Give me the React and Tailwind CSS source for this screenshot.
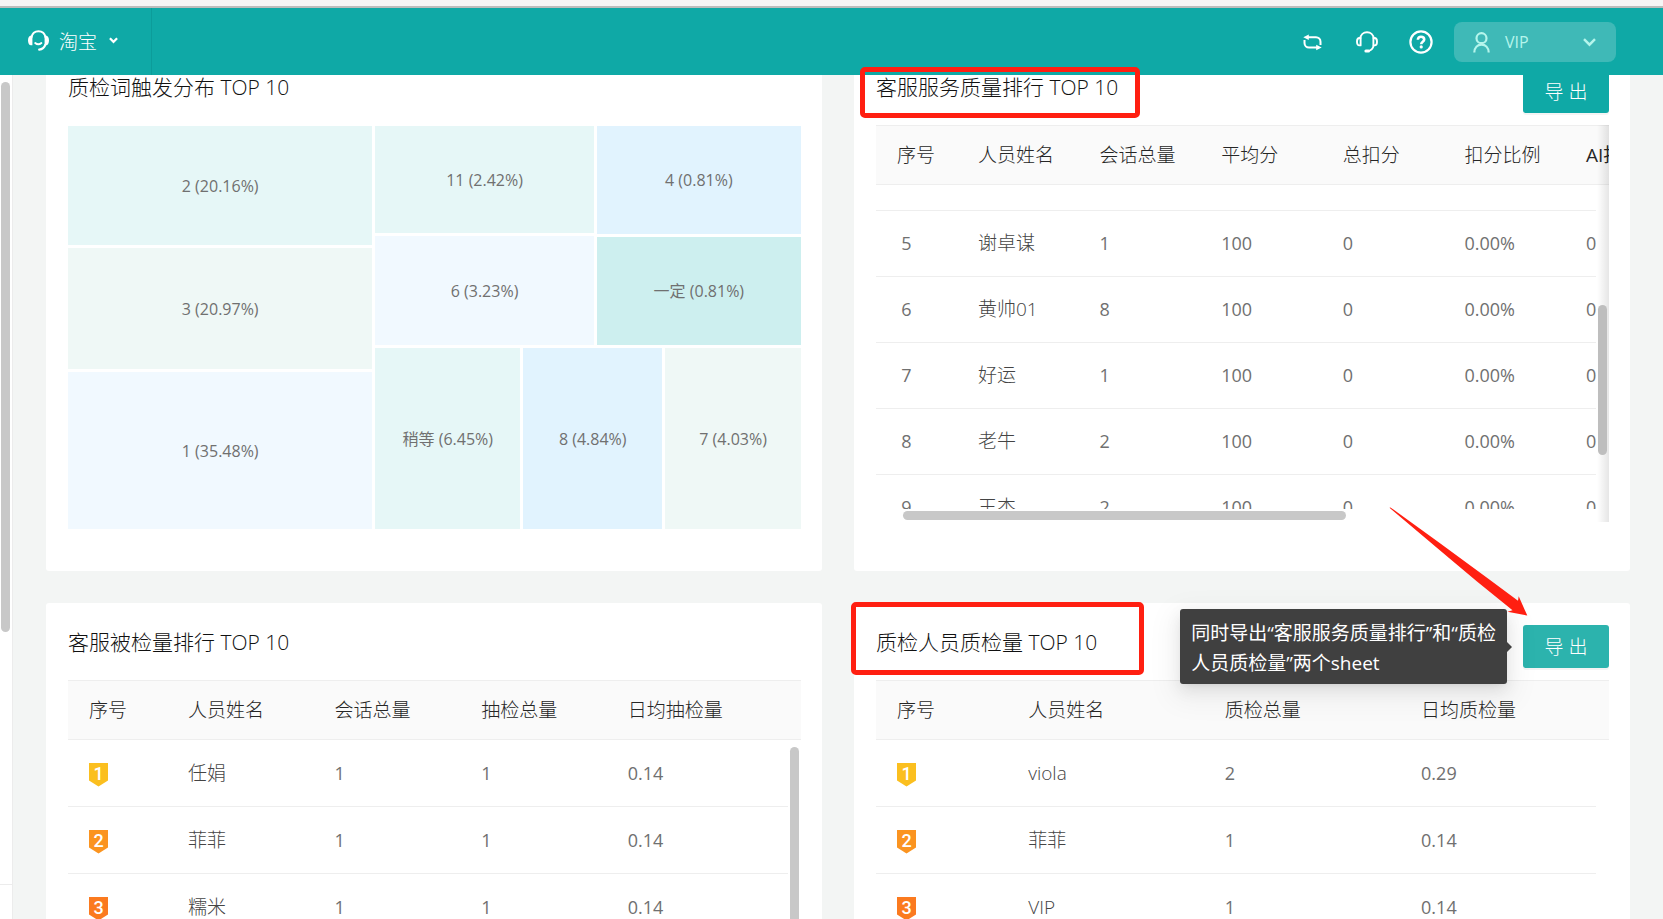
import React from 'react';

const BLOCK = 'flex items-center justify-center overflow-hidden whitespace-nowrap text-[16px] text-[#707070]';
const BADGE_TONES = {
  1: 'bg-[#fbbf1f]',
  2: 'bg-[#fb9420]',
  3: 'bg-[#fb7a1f]',
};

const QUALITY_COLUMNS = [
  { title: '序号', width: 'w-[81px]' },
  { title: '人员姓名' },
  { title: '会话总量' },
  { title: '平均分' },
  { title: '总扣分' },
  { title: '扣分比例' },
  { title: 'AI扣分', width: 'w-[31px]' },
];

const QUALITY_ROWS = [
  [5, '谢卓谋', '1', '100', '0', '0.00%', '0'],
  [6, '黄帅01', '8', '100', '0', '0.00%', '0'],
  [7, '好运', '1', '100', '0', '0.00%', '0'],
  [8, '老牛', '2', '100', '0', '0.00%', '0'],
  [9, '王杰', '2', '100', '0', '0.00%', '0'],
];

const CHECKED_COLUMNS = [
  { title: '序号', width: 'w-[13.5%]' },
  { title: '人员姓名', width: 'w-[20%]' },
  { title: '会话总量', width: 'w-[20%]' },
  { title: '抽检总量', width: 'w-[20%]' },
  { title: '日均抽检量' },
];

const CHECKED_ROWS = [
  [1, '任娟', '1', '1', '0.14'],
  [2, '菲菲', '1', '1', '0.14'],
  [3, '糯米', '1', '1', '0.14'],
];

const INSPECTOR_COLUMNS = [
  { title: '序号', width: 'w-[17.9%]' },
  { title: '人员姓名', width: 'w-[26.8%]' },
  { title: '质检总量', width: 'w-[26.8%]' },
  { title: '日均质检量' },
];

const INSPECTOR_ROWS = [
  [1, 'viola', '2', '0.29'],
  [2, '菲菲', '1', '0.14'],
  [3, 'VIP', '1', '0.14'],
];

function ServiceIcon() {
  return (
    <svg width="21" height="21" viewBox="0 0 21 21" fill="none" stroke="currentColor" strokeLinecap="round" aria-hidden="true">
      <path d="M3.4 7.5C4.2 3.6 7 1.3 10.5 1.3s6.3 2.3 7.1 6.2" strokeWidth="2" />
      <path d="M4.4 5.6v9.6H3C1.2 15.2 0 13 0 10.4s1.2-4.8 3-4.8zM16.6 5.6v9.6H18c1.8 0 3-2.2 3-4.8s-1.2-4.8-3-4.8z" fill="currentColor" stroke="none" />
      <path d="M7.2 13c1.8 1.5 4.4 1.5 6.2 0" strokeWidth="1.9" />
      <path d="M17.4 14.6c-1 2.9-3.2 4.7-6.2 5" strokeWidth="2.2" />
    </svg>
  );
}

function SwitchIcon() {
  return (
    <svg width="19" height="17" viewBox="0 0 19 17" fill="none" stroke="currentColor" strokeWidth="2" aria-hidden="true">
      <path d="M3.5 3.2H13a4.5 4.5 0 0 1 4.5 4.5V11" />
      <path d="M15.5 13.5H6A4.500 4.500 0 0 1 1.500 9V6" />
      <path d="M.3 3.2 5.8.4V6zM18.7 13.5l-5.500-2.800v5.600z" fill="currentColor" stroke="none" />
    </svg>
  );
}

function HeadsetIcon() {
  return (
    <svg width="22" height="22" viewBox="0 0 22 22" fill="none" stroke="currentColor" strokeWidth="1.9" strokeLinecap="round" aria-hidden="true">
      <path d="M4.3 7.5C4.7 3.7 7.4 1.2 11 1.2s6.3 2.5 6.7 6.3" />
      <path d="M4.6 7v7.4H3.4C1.9 14.4 1 13 1 10.7S1.9 7 3.4 7zM17.4 7v7.4h1.2c1.5 0 2.4-1.4 2.4-3.7S20.1 7 18.6 7z" strokeLinejoin="round" />
      <path d="M17.6 14.6c-.6 2.8-2.4 4.8-5 5.3" />
      <path d="M9.9 20.1h2.6" strokeWidth="3" />
    </svg>
  );
}

function HelpIcon() {
  return (
    <svg width="24" height="24" viewBox="0 0 24 24" fill="none" stroke="currentColor" strokeWidth="2.2" aria-hidden="true">
      <circle cx="12" cy="12" r="10.6" />
      <path d="M8.9 9.7c0-1.9 1.3-3 3.1-3s3.2 1.1 3.2 2.8c0 2.2-3 2.3-3 4.7" strokeWidth="2.6" />
      <circle cx="12.2" cy="16.9" r="1.6" fill="currentColor" stroke="none" />
    </svg>
  );
}

function UserIcon() {
  return (
    <svg width="17" height="21" viewBox="0 0 17 21" fill="none" stroke="currentColor" strokeWidth="2.2" aria-hidden="true">
      <circle cx="8.5" cy="6.2" r="5" />
      <path d="M1.3 20.5c.2-4.7 3.2-7.8 7.2-7.8s7 3.1 7.2 7.8" />
    </svg>
  );
}

function TopBar() {
  return (
    <header className="relative z-10 shrink-0">
      <div className="h-2 border-b-2 border-[#bcbdbc] bg-[#f5f5f5]" />
      <div className="flex h-[67px] items-center justify-between bg-[#0fa9a6] pr-[47px] text-white">
        <button type="button" className="flex h-full w-[152px] items-center border-r border-[#0c9c9a] pb-0.5 pl-7">
          <ServiceIcon />
          <span className="ml-[10px] pt-[3px] text-[19px] font-light">淘宝</span>
          <svg className="ml-3" width="9" height="7" viewBox="0 0 9 7" fill="none" stroke="currentColor" strokeWidth="2.2" aria-hidden="true">
            <path d="M.9 1.3 4.5 4.9 8.1 1.3" />
          </svg>
        </button>
        <div className="flex items-center pt-px">
          <button type="button" aria-label="切换" className="mr-[34px]"><SwitchIcon /></button>
          <button type="button" aria-label="客服" className="mr-[31px]"><HeadsetIcon /></button>
          <button type="button" aria-label="帮助" className="mr-[21px]"><HelpIcon /></button>
          <button type="button" className="flex h-10 w-[162px] items-center rounded-lg bg-[#3fb9b7] pl-[19px] pr-5 text-[#b5f5ec]">
            <UserIcon />
            <span className="ml-[15px] flex-1 text-left text-[16px]">VIP</span>
            <svg width="13" height="9" viewBox="0 0 13 9" fill="none" stroke="currentColor" strokeWidth="2.4" aria-hidden="true">
              <path d="M1 1.2 6.5 6.7 12 1.2" />
            </svg>
          </button>
        </div>
      </div>
    </header>
  );
}

function Card({ title, mark, action, children }) {
  return (
    <section className="rounded-[3px] bg-white py-[22px] pl-[22px] pr-[21px]">
      <div className="mb-3 flex h-[43px] items-start justify-between">
        <h2 className="relative text-[21px] font-light leading-[34px] text-[#111]">
          {title}
          {mark}
        </h2>
        {action}
      </div>
      {children}
    </section>
  );
}

function ExportButton({ active }) {
  return (
    <button
      type="button"
      className={`h-[43px] w-[86px] rounded-[3px] pt-0.5 text-[19px] font-light text-white shadow-[0_2px_0_rgba(0,0,0,0.045)] ${active ? 'bg-[#2cb3ad]' : 'bg-[#0fa9a6]'}`}
    >
      导 出
    </button>
  );
}

function RankCell({ rank }) {
  if (rank > 3) {
    return <span className="block w-[19px] text-center">{rank}</span>;
  }
  return (
    <span
      className={`mt-[3px] block h-6 w-[19px] text-center font-[Roboto] text-[18px] font-medium leading-[21px] text-white [clip-path:polygon(0_0,100%_0,100%_75%,50%_100%,0_75%)] ${BADGE_TONES[rank]}`}
    >
      {rank}
    </span>
  );
}

function RankTable({ columns, rows, scrolled }) {
  const last = columns.length - 1;
  return (
    <table className="w-full table-fixed border-separate border-spacing-0 text-left">
      <colgroup>
        {columns.map((column) => <col key={column.title} className={column.width} />)}
        <col className="w-[13px]" />
      </colgroup>
      <thead>
        <tr className="h-[60px]">
          {columns.map((column, i) => (
            <th
              key={column.title}
              colSpan={i === last ? 2 : 1}
              className={`overflow-hidden whitespace-nowrap border-y border-[#eee] bg-[#fafafa] pl-[21px] text-[19px] text-[#262626] ${column.title.startsWith('AI') ? 'font-normal' : 'font-light'}`}
            >
              {column.title}
            </th>
          ))}
        </tr>
      </thead>
      <tbody>
        {scrolled && (
          <tr className="h-[26px]" aria-hidden="true">
            <td colSpan={columns.length} className="border-b border-[#eee]" />
            <td />
          </tr>
        )}
        {rows.map((row) => (
          <tr key={row[0]} className={scrolled ? 'h-[66px]' : 'h-[67px]'}>
            {row.map((value, i) => (
              <td
                key={columns[i].title}
                className={`whitespace-nowrap border-b border-[#eee] pl-[21px] ${i === 1 ? 'text-[19px] font-light text-[#444]' : 'text-[18px] text-[#707070]'}`}
              >
                {i === 0 ? <RankCell rank={value} /> : value}
              </td>
            ))}
            <td />
          </tr>
        ))}
      </tbody>
    </table>
  );
}

function WordTreemap() {
  return (
    <div className="grid h-[404px] grid-cols-[304fr_425fr] gap-[3px] pt-px">
      <div className="grid grid-rows-[119fr_121fr_157fr] gap-[3px]">
        <div className={`${BLOCK} bg-[#e6f7f7]`}>2 (20.16%)</div>
        <div className={`${BLOCK} bg-[#eff8f6]`}>3 (20.97%)</div>
        <div className={`${BLOCK} bg-[#f1f9ff]`}>1 (35.48%)</div>
      </div>
      <div className="grid grid-rows-[219fr_181fr] gap-[3px]">
        <div className="grid grid-cols-[218fr_204fr] gap-[3px]">
          <div className="grid grid-rows-[107fr_109fr] gap-[3px]">
            <div className={`${BLOCK} bg-[#e6f7f7]`}>11 (2.42%)</div>
            <div className={`${BLOCK} bg-[#f1f9ff]`}>6 (3.23%)</div>
          </div>
          <div className="grid grid-rows-2 gap-[3px]">
            <div className={`${BLOCK} bg-[#e1f3fe]`}>4 (0.81%)</div>
            <div className={`${BLOCK} bg-[#cdefef]`}>一定 (0.81%)</div>
          </div>
        </div>
        <div className="grid grid-cols-[145fr_139fr_136fr] gap-[3px]">
          <div className={`${BLOCK} bg-[#e6f7f7]`}>稍等 (6.45%)</div>
          <div className={`${BLOCK} bg-[#e1f3fe]`}>8 (4.84%)</div>
          <div className={`${BLOCK} bg-[#eff8f6]`}>7 (4.03%)</div>
        </div>
      </div>
    </div>
  );
}

function ExportTip() {
  return (
    <div
      role="tooltip"
      className="absolute -top-4 right-[102px] whitespace-nowrap rounded-[3px] bg-[#404040] px-[11px] pb-1.5 pt-[9px] text-[19px] leading-[30px] text-white shadow-[0_3px_6px_-4px_rgba(0,0,0,0.12),0_6px_16px_rgba(0,0,0,0.08),0_9px_28px_8px_rgba(0,0,0,0.05)]"
    >
      同时导出“客服服务质量排行”和“质检<br />人员质检量”两个sheet
      <span className="absolute left-full top-[33px] h-[10px] w-[5px] bg-[#404040] [clip-path:polygon(0_0,100%_50%,0_100%)]" />
    </div>
  );
}

export default function App() {
  return (
    <div className="flex h-screen flex-col overflow-hidden bg-[#f3f5f4] [font-family:'Open_Sans','Noto_Sans_CJK_SC',sans-serif]">
      <TopBar />
      <div className="flex min-h-0 flex-1">
        <aside className="relative w-[13px] shrink-0 border-r border-[#ececec] bg-white">
          <div className="ml-px mt-[7px] h-[550px] w-[9px] rounded-full bg-[#c8c8c8]" />
          <div className="absolute inset-x-0 bottom-0 h-[35px] border-t border-[#ececec]" />
        </aside>

        {/* content is scrolled a little way under the top bar */}
        <main className="-mt-[27px] grid h-max min-w-0 flex-1 grid-cols-2 gap-8 px-[33px]">
          <Card title="质检词触发分布 TOP 10">
            <WordTreemap />
          </Card>

          <Card
            title="客服服务质量排行 TOP 10"
            mark={<span className="absolute -left-4 -top-[3px] z-20 h-[51px] w-[280px] rounded-[5px] border-5 border-[#ff1f11]" />}
            action={<ExportButton />}
          >
            <div className="relative mb-[27px] h-[397px]">
              <div className="h-[384px] overflow-hidden">
                <RankTable columns={QUALITY_COLUMNS} rows={QUALITY_ROWS} scrolled />
              </div>
              <div className="absolute inset-y-0 right-0 w-[12px] bg-gradient-to-r from-transparent to-black/10" />
              <div className="absolute right-0.5 top-[180px] h-[150px] w-[9px] rounded-full bg-[#bebebe]" />
              <div className="absolute bottom-0.5 left-[27px] h-[9px] w-[443px] rounded-full bg-[#c8c8c8]" />
            </div>
          </Card>

          <Card title="客服被检量排行 TOP 10">
            <div className="relative">
              <RankTable columns={CHECKED_COLUMNS} rows={CHECKED_ROWS} />
              <div className="absolute right-0.5 top-[67px] h-[220px] w-[9px] rounded-full bg-[#c8c8c8]" />
            </div>
          </Card>

          <Card
            title="质检人员质检量 TOP 10"
            mark={<span className="absolute -left-[25px] -top-[23px] h-[73px] w-[293px] rounded-[5px] border-5 border-[#ff1f11]" />}
            action={(
              <div className="relative z-10">
                <ExportButton active />
                <ExportTip />
                <svg className="absolute -left-[134px] -top-[118px]" width="139" height="110" viewBox="0 0 139 110" fill="#ff1f11" aria-hidden="true">
                  <path d="M.5.8 1.5.4 50 35.5 99 71.5 129 93.8 129.7 89.3 138.3 108.6 118.5 104.7 123.5 103.3 88 74.5 60 51z" />
                </svg>
              </div>
            )}
          >
            <RankTable columns={INSPECTOR_COLUMNS} rows={INSPECTOR_ROWS} />
          </Card>
        </main>
      </div>
    </div>
  );
}
